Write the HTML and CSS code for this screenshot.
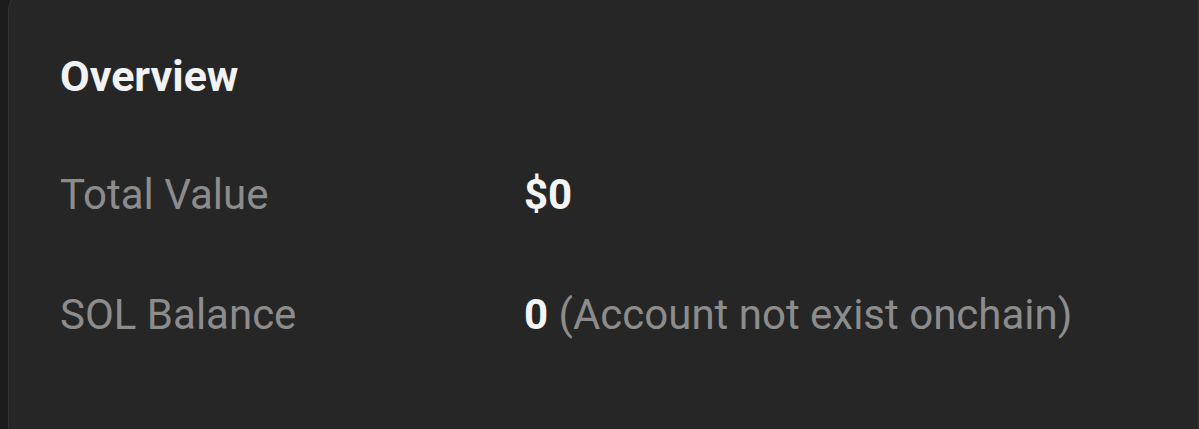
FILE: index.html
```html
<!DOCTYPE html>
<html>
<head>
<meta charset="utf-8">
<link rel="stylesheet" href="styles.css">
</head>
<body>
<section class="card">
  <h2 class="title">Overview</h2>
  <div class="rows">
    <div class="row">
      <span class="label">Total Value</span>
      <span class="value"><b>$0</b></span>
    </div>
    <div class="row">
      <span class="label">SOL Balance</span>
      <span class="value"><b>0</b> <span class="note">(Account not exist onchain)</span></span>
    </div>
  </div>
</section>
</body>
</html>
```
FILE: styles.css
```css
html, body {
  margin: 0;
  padding: 0;
  background: #1c1c1c;
  height: 100%;
  overflow: hidden;
}
body {
  padding-left: 8px;
  font-family: Roboto, "Liberation Sans", sans-serif;
}
.card {
  margin-top: -8px;
  height: 437px;
  background: #262626;
  border: 1px solid #333333;
  border-bottom: none;
  border-radius: 18px 0 0 0;
  padding: 53px 0 0 51px;
  box-sizing: border-box;
}
.title {
  margin: 0;
  font-size: 43px;
  font-weight: 700;
  color: #f0f2f4;
  line-height: 60px;
}
.rows {
  margin-top: 60px;
  display: flex;
  flex-direction: column;
  gap: 62px;
}
.row {
  display: grid;
  grid-template-columns: 464px 1fr;
  font-size: 42px;
  line-height: 58px;
}
.label {
  color: #8c8c8c;
}
.value {
  color: #f4f4f4;
}
.value b {
  font-weight: 700;
}
.note {
  color: #8c8c8c;
}
```
